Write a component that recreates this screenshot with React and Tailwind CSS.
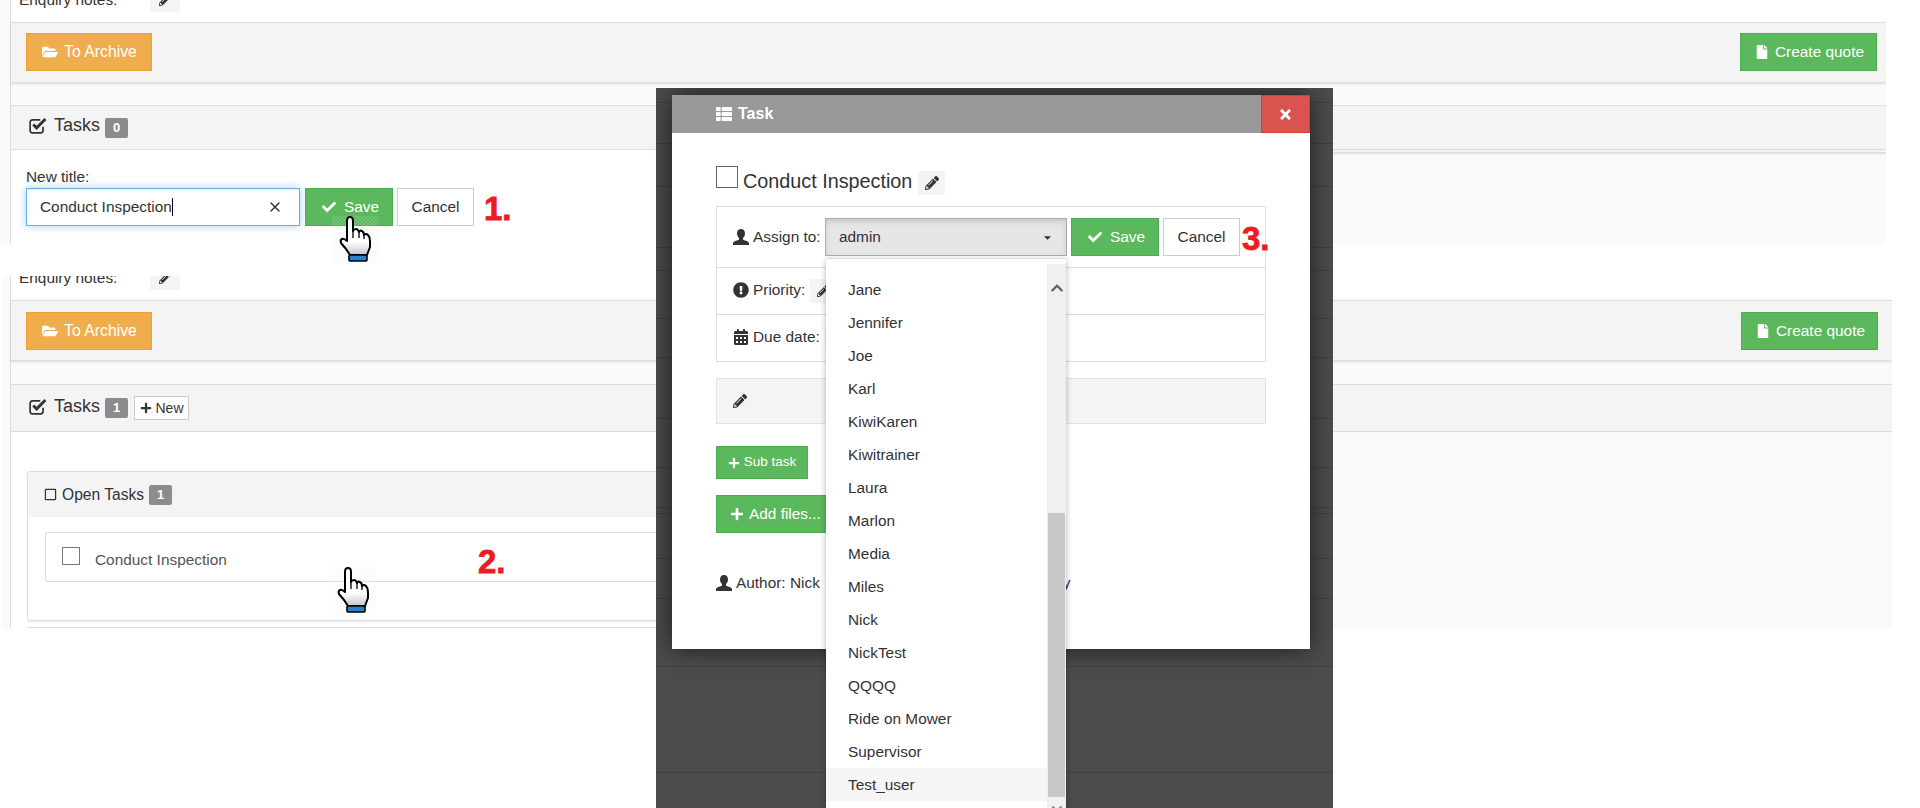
import React from 'react';
import { X } from 'lucide-react';
import {
  FaCalendarAlt,
  FaCaretDown,
  FaCheck,
  FaChevronDown,
  FaChevronUp,
  FaExclamationCircle,
  FaFile,
  FaFolderOpen,
  FaPencilAlt,
  FaPlus,
  FaRegSquare,
  FaThList,
  FaTimes,
} from 'react-icons/fa';

const assignees = [
  'Jane', 'Jennifer', 'Joe', 'Karl', 'KiwiKaren', 'Kiwitrainer', 'Laura', 'Marlon',
  'Media', 'Miles', 'Nick', 'NickTest', 'QQQQ', 'Ride on Mower', 'Supervisor', 'Test_user',
];

// heights of the page rows that still show through the dark backdrop
const backdropRows = [
  'h-[15px]', 'h-[41px]', 'h-[43px]', 'h-[61px]', 'h-[23px]', 'h-[48px]', 'h-[39px]', 'h-[61px]',
  'h-[49px]', 'h-[40px]', 'h-[6px]', 'h-[45px]', 'h-[40px]', 'h-[68px]', 'h-[106px]',
];

const UserIcon = ({ className = '' }) => (
  <svg className={`shrink-0 ${className}`} width="16" height="16" viewBox="0 0 16 16" fill="currentColor">
    <path d="M8 0c2.6 0 4 2 4 4.4 0 2-1 3.8-2 4.6v1.4c0 .6 6 1.6 6 3.6V16H0v-2c0-2 6-3 6-3.6V9C5 8.2 4 6.4 4 4.4 4 2 5.4 0 8 0z" />
  </svg>
);

const CheckSquareIcon = ({ className = '' }) => (
  <svg className={`shrink-0 ${className}`} width="18" height="17" viewBox="0 0 16 15" fill="none" stroke="#333">
    <path d="M12.5 8.5V12a2 2 0 0 1-2 2H3a2 2 0 0 1-2-2V4.5a2 2 0 0 1 2-2h7" strokeWidth="1.5" />
    <path d="M3.8 6.6l3 3L14.6 1.8" strokeWidth="2.6" />
  </svg>
);

const PencilButton = ({ className = '', icon = 'text-[12px]' }) => (
  <span className={`flex shrink-0 items-center justify-center bg-[#f4f4f4] text-[#333] ${className}`}>
    <FaPencilAlt className={icon} />
  </span>
);

const Badge = ({ children }) => (
  <span className="flex h-[20px] w-[23px] shrink-0 items-center justify-center rounded-[2px] bg-[#8c8c8c] text-[13px] font-bold text-white">
    {children}
  </span>
);

const Hand = ({ className }) => (
  <svg className={`absolute ${className}`} width="52" height="52" viewBox="0 0 52 52">
    <defs>
      <pattern id="dither" width="4" height="4" patternUnits="userSpaceOnUse">
        <rect width="2" height="2" fill="#e8e8e8" />
        <rect x="2" y="2" width="2" height="2" fill="#e8e8e8" />
      </pattern>
      <linearGradient id="palm" x1="0" y1="0" x2="0" y2="1">
        <stop offset="0" stopColor="#ffffff" />
        <stop offset="0.65" stopColor="#ffffff" />
        <stop offset="1" stopColor="#c4c6cc" />
      </linearGradient>
    </defs>
    <rect x="3" y="3" width="46" height="46" fill="url(#dither)" opacity="0.2" />
    <g transform="translate(11 4)">
      <path
        d="M7 24V4Q7 0 10 0Q13 0 13 4V14Q14 12 16 12Q18 12 19 15Q20 13 22 14Q24 15 24 18Q26 16 28 18Q30 20 30 24V30L27 38H10L6 32L1 26Q0 23 2 22Q4 21 7 24Z"
        fill="url(#palm)"
        stroke="#000"
        strokeWidth="2"
        strokeLinejoin="round"
      />
      <path d="M13 14V21M19 15V21M24 18V22" stroke="#000" strokeWidth="1.3" fill="none" />
      <rect x="9" y="38" width="18" height="6" rx="1" fill="#2b80d0" stroke="#000" strokeWidth="1.6" />
    </g>
  </svg>
);

const PanelFooter = ({ className }) => (
  <div className={`flex h-[61px] justify-between border-y border-[#ddd] bg-[#f4f4f4] pl-[15px] shadow-[0_1px_3px_rgba(0,0,0,0.12)] ${className}`}>
    <button className="flex h-[38px] w-[126px] items-center border border-[#eea236] bg-[#f0ad4e] pl-[15px] text-[15.8px] text-white">
      <FaFolderOpen className="mr-[6px] text-[16px]" />
      To Archive
    </button>
    <button className="flex h-[38px] w-[137px] items-center border border-[#4cae4c] bg-[#5cb85c] pl-[14px] text-white">
      <FaFile className="mr-[6px] text-[14px]" />
      Create quote
    </button>
  </div>
);

const EnquiryRow = ({ className }) => (
  <div className={`flex bg-white pl-[8px] ${className}`}>
    <span className="flex h-[24px] w-[131px] items-center">Enquiry notes:</span>
    <PencilButton className="h-[24px] w-[30px]" />
  </div>
);

const TasksTitle = () => (
  <>
    <CheckSquareIcon className="mr-[7px] mb-[4px]" />
    <span className="mr-[5px] mb-[4px] text-[18px]">Tasks</span>
  </>
);

const SaveCancel = () => (
  <>
    <button className="flex h-[38px] w-[88px] items-center border border-[#4cae4c] bg-[#5cb85c] pl-[16px] text-white">
      <FaCheck className="mr-[8px] text-[14px]" />
      Save
    </button>
    <button className="ml-[4px] flex h-[38px] w-[77px] items-center justify-center border border-[#ccc] bg-white">
      Cancel
    </button>
  </>
);

const StepLabel = ({ children, className = '' }) => (
  <span className={`shrink-0 text-[33px] leading-none font-bold text-[#ed1c24] [-webkit-text-stroke:0.8px_#ed1c24] ${className}`}>
    {children}
  </span>
);

const TopPanel = () => (
  <div className="h-[244px] w-[1886px] overflow-hidden bg-[#fafafa] pl-[10px]">
    <div className="border-l border-[#ddd]">
      <EnquiryRow className="-mt-[12px] h-[34px]" />
      <PanelFooter className="items-start pt-[10px] pr-[9px]" />
      <div className="mt-[22px] flex h-[45px] items-center border-y border-[#ddd] bg-[#f4f4f4] pl-[18px]">
        <TasksTitle />
        <Badge>0</Badge>
      </div>
      <div className="flex h-[100px]">
        <div className="w-[645px] bg-white pt-[16px] pl-[15px]">
          <div className="leading-[22px]">New title:</div>
          <div className="flex items-center">
            <div className="flex h-[38px] w-[274px] items-center border border-[#66afe9] pr-[16px] pl-[13px] shadow-[inset_0_1px_1px_rgba(0,0,0,0.075),0_0_8px_rgba(102,175,233,0.6)]">
              <span>Conduct Inspection</span>
              <span className="h-[18px] w-px bg-black" />
              <X className="ml-auto h-[16px] w-[16px] text-[#333]" />
            </div>
            <div className="ml-[5px] flex">
              <SaveCancel />
            </div>
            <StepLabel className="mt-[2px] ml-[10px]">1.</StepLabel>
          </div>
        </div>
        <div className="flex-1">
          <div className="h-[3px] border-b border-[#ddd] bg-[#f4f4f4] shadow-[0_1px_2px_rgba(0,0,0,0.12)]" />
        </div>
      </div>
    </div>
  </div>
);

const BottomPanel = () => (
  <div className="mt-[32px] ml-[2px] h-[353px] w-[1890px] overflow-hidden bg-[#fafafa] pl-[8px]">
    <div className="border-l border-[#ddd]">
      <EnquiryRow className="-mt-[10px] h-[34px]" />
      <PanelFooter className="items-center pr-[14px]" />
      <div className="mt-[23px] flex h-[48px] items-center border-y border-[#ddd] bg-[#f4f4f4] pl-[18px]">
        <TasksTitle />
        <Badge>1</Badge>
        <button className="ml-[6px] flex h-[24px] w-[55px] items-center justify-center border border-[#ccc] bg-white text-[14px]">
          <FaPlus className="mr-[4px] text-[12px]" />
          New
        </button>
      </div>
      <div className="w-[1000px] bg-white px-[16px] pt-[39px]">
        <div className="rounded-[3px] border border-[#ddd] shadow-[0_1px_2px_rgba(0,0,0,0.1)]">
          <div className="flex h-[45px] items-center bg-[#f4f4f4] pl-[16px]">
            <FaRegSquare className="mr-[5px] text-[13px]" />
            <span className="mr-[5px] text-[15.6px]">Open Tasks</span>
            <Badge>1</Badge>
          </div>
          <div className="px-[17px] pt-[15px] pb-[38px]">
            <div className="relative flex h-[50px] items-center rounded-[2px] border border-[#ddd] pl-[16px]">
              <span className="mb-[3px] h-[18px] w-[18px] border border-[#777]" />
              <span className="mt-[5px] ml-[15px] text-[#555]">Conduct Inspection</span>
              <StepLabel className="absolute top-[12px] left-[432px]">2.</StepLabel>
            </div>
          </div>
        </div>
        <div className="mt-[6px] h-[6px] rounded-t-[3px] border-t border-[#ddd]" />
      </div>
    </div>
  </div>
);

const AssignDropdown = () => (
  <div className="absolute top-[170px] left-[170px] flex h-[560px] w-[240px] rounded-t-[2px] border-t border-[#ddd] bg-white shadow-[0_2px_6px_rgba(0,0,0,0.3)]">
    <ul className="flex-1 pt-[14px]">
      {assignees.map((name) => (
        <li
          key={name}
          className={`flex h-[33px] items-center pl-[22px] ${name === 'Test_user' ? 'bg-[#f5f5f5]' : ''}`}
        >
          {name}
        </li>
      ))}
    </ul>
    <div className="mt-[5px] flex w-[19px] flex-col items-center bg-[#f0f0f0]">
      <div className="h-[249px] w-full pt-[17px] pl-[3px]">
        <FaChevronUp className="text-[14px] text-[#606060]" />
      </div>
      <div className="h-[284px] w-[17px] bg-[#c8c8c8]" />
      <FaChevronDown className="mt-[6px] text-[12px] text-[#888]" />
    </div>
  </div>
);

const TaskModal = () => (
  <div className="absolute top-[7px] left-[16px] h-[554px] w-[638px] bg-white shadow-[0_0_24px_rgba(0,0,0,0.65)]">
    <div className="flex h-[38px] items-center bg-[#999] pl-[44px] text-white">
      <FaThList className="mr-[6px] text-[16px]" />
      <span className="text-[16px] font-bold">Task</span>
      <span className="ml-auto flex h-full w-[49px] items-center justify-center border border-[#d43f3a] bg-[#d9534f]">
        <FaTimes className="text-[15px]" />
      </span>
    </div>
    <div className="px-[44px] pt-[33px]">
      <div className="flex h-[29px] items-start">
        <span className="h-[22px] w-[22px] border border-[#666]" />
        <span className="mt-[2px] ml-[5px] text-[19.8px] leading-[26px]">Conduct Inspection</span>
        <PencilButton className="mt-[5px] ml-[6px] h-[24px] w-[27px]" icon="text-[14px]" />
      </div>
      <div className="mt-[11px] h-[156px] border border-[#ddd]">
        <div className="flex h-[60px] items-center whitespace-nowrap pl-[16px]">
          <UserIcon className="mr-[4px]" />
          <span className="w-[72px] shrink-0">Assign to:</span>
          <div className="flex h-[38px] w-[242px] shrink-0 items-center justify-between border border-[#adadad] bg-[#e6e6e6] px-[13px] shadow-[inset_0_3px_5px_rgba(0,0,0,0.125)]">
            <span>admin</span>
            <FaCaretDown className="text-[11px]" />
          </div>
          <div className="ml-[4px] flex shrink-0">
            <SaveCancel />
          </div>
          <StepLabel className="mt-[2px] ml-[2px]">3.</StepLabel>
        </div>
        <div className="flex h-[47px] items-center border-t border-[#ddd] pl-[16px]">
          <FaExclamationCircle className="mr-[4px] mb-[2px] text-[16px]" />
          <span className="mb-[2px]">Priority:</span>
          <PencilButton className="ml-[5px] h-[24px] w-[26px]" />
        </div>
        <div className="flex h-[47px] items-center border-t border-[#ddd] pl-[16px]">
          <FaCalendarAlt className="mr-[4px] mb-[2px] text-[16px]" />
          <span className="mb-[2px]">Due date:</span>
          <PencilButton className="ml-[5px] h-[24px] w-[26px]" />
        </div>
      </div>
      <div className="mt-[16px] h-[46px] border border-[#e3e3e3] bg-[#f5f5f5] pt-[9px] pl-[10px]">
        <PencilButton className="h-[25px] w-[26px] bg-[#f0f0f0]" icon="text-[14px]" />
      </div>
      <button className="mt-[22px] flex h-[33px] w-[92px] items-center justify-center border border-[#4cae4c] bg-[#5cb85c] text-[13.5px] text-white">
        <FaPlus className="mr-[4px] text-[12px]" />
        Sub task
      </button>
      <button className="mt-[16px] flex h-[38px] w-[120px] items-center border border-[#4cae4c] bg-[#5cb85c] pl-[13px] text-white">
        <FaPlus className="mr-[5px] text-[14px]" />
        Add files...
      </button>
      <div className="mt-[39px] flex h-[22px] items-center">
        <UserIcon className="mr-[4px]" />
        <span>Author: Nick</span>
        <span className="ml-[243px]">y</span>
      </div>
    </div>
  </div>
);

const App = () => {
  return (
    <div className="relative h-[808px] w-[1920px] overflow-hidden bg-white font-['Liberation_Sans',Arial,sans-serif] text-[15.4px] text-[#333]">
      <TopPanel />
      <BottomPanel />

      <Hand className="top-[213px] left-[329px]" />
      <Hand className="top-[564px] left-[327px]" />

      <div className="absolute top-[88px] left-[656px] h-[720px] w-[677px] overflow-hidden bg-[#4c4c4c]">
        {backdropRows.map((row, i) => (
          <div key={i} className={`border-b border-[#414141] ${row}`} />
        ))}
        <TaskModal />
        <AssignDropdown />
      </div>
    </div>
  );
};

export default App;
